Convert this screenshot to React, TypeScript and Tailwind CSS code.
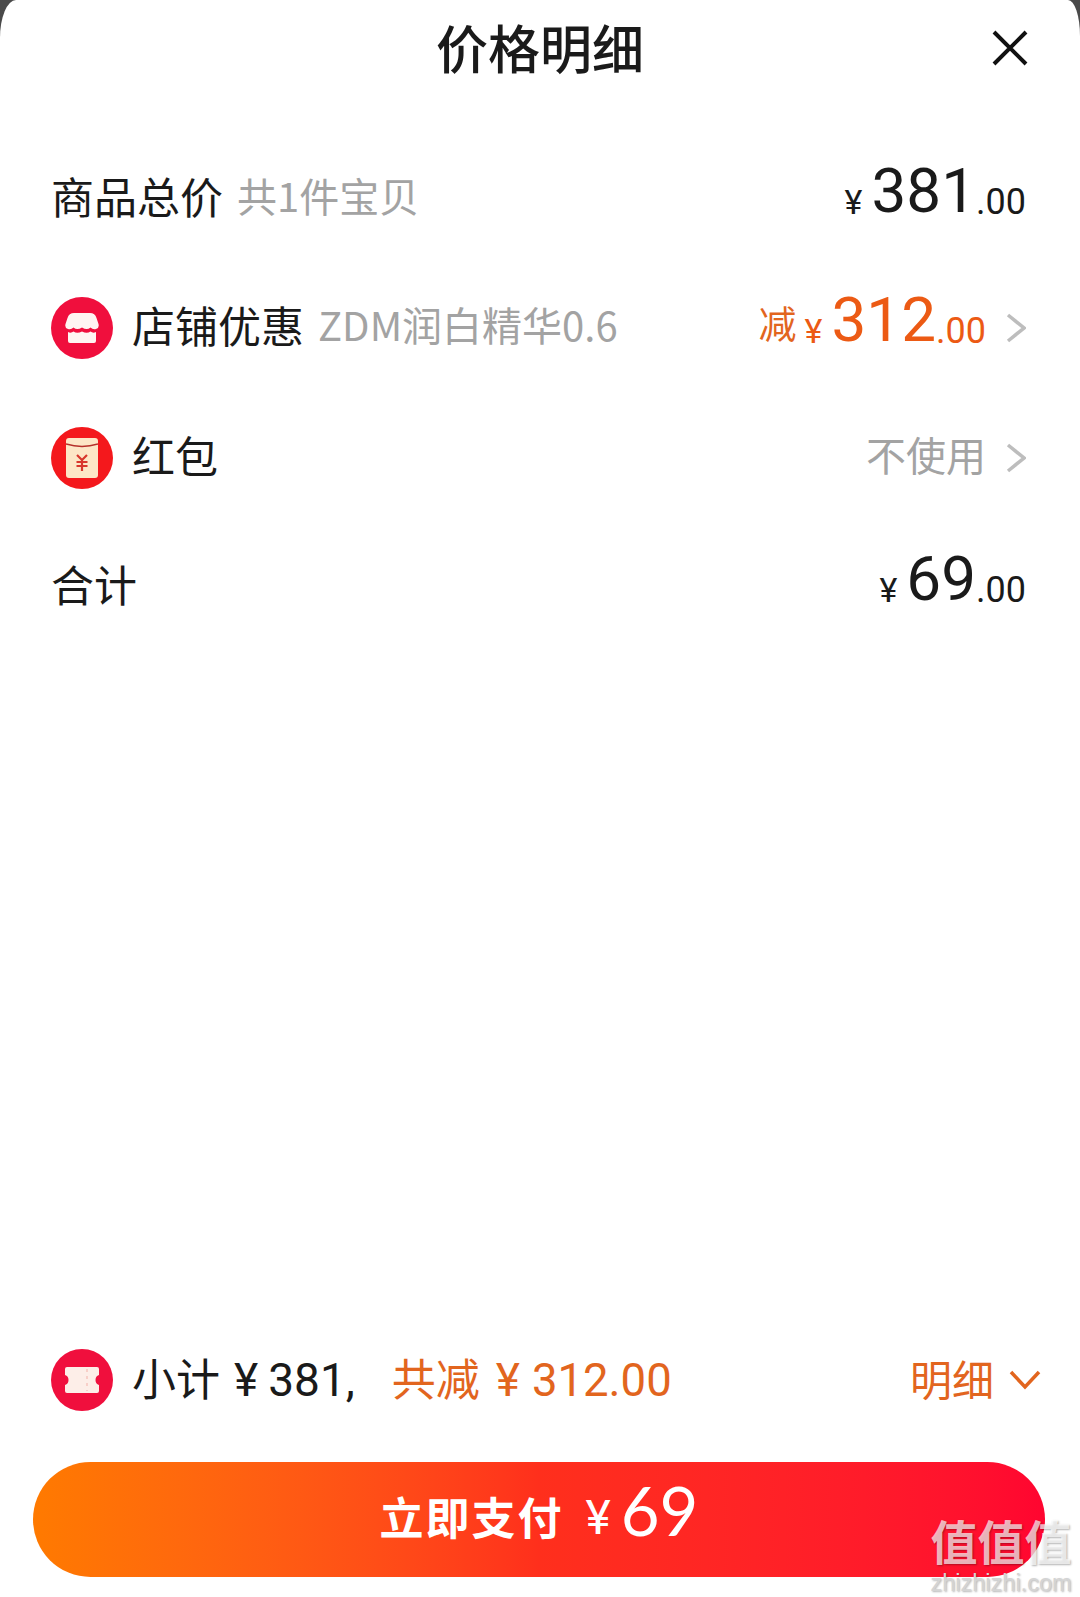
const CJK = "font-['Noto_Sans_CJK_SC','Noto_Sans',sans-serif]";

function Chevron() {
  return (
    <svg width="20" height="32" viewBox="0 0 20 32" fill="none" stroke="#bdbdbd" strokeWidth="3.500" className="shrink-0">
      <path d="M2 3 L18 16 L2 29" />
    </svg>
  );
}

function ShopIcon() {
  return (
    <div className="w-[62px] h-[62px] rounded-full bg-[#f00f3d] flex items-center justify-center shrink-0">
      <svg width="34" height="30" viewBox="0 0 34 30">
        <path d="M9 0 H25 Q30 0 31.500 5 L33.500 11 Q34.500 15 31 16 Q28 17 25.500 14.500 Q22 17.500 17 14.500 Q12 17.500 8.500 14.500 Q6 17 3 16 Q-.5 15 .5 11 L2.500 5 Q4 0 9 0 Z" fill="#fff5f2" />
        <path d="M3 19 Q6 20.500 8.500 18.500 Q12 21 17 18.500 Q22 21 25.500 18.500 Q28 20.500 31 19 V28 Q31 30 29 30 H5 Q3 30 3 28 Z" fill="#fff5f2" />
      </svg>
    </div>
  );
}

function EnvelopeIcon() {
  return (
    <div className="w-[62px] h-[62px] rounded-full bg-[#f4181c] flex items-center justify-center shrink-0">
      <svg width="32" height="40" viewBox="0 0 32 40">
        <rect x="0" y="0" width="32" height="40" rx="3" fill="#fde6c6" />
        <path d="M0 6 Q16 11 32 6" fill="none" stroke="#b5302a" strokeWidth="1.500" />
        <path d="M11 17 L16 22 L21 17 M10.500 24 H21.500 M10.500 28 H21.500 M16 22 V33" fill="none" stroke="#d8362c" strokeWidth="2.200" />
      </svg>
    </div>
  );
}

function TicketIcon() {
  return (
    <div className="w-[62px] h-[62px] rounded-full bg-[#f00f3d] flex items-center justify-center shrink-0">
      <svg width="34" height="26" viewBox="0 0 34 26">
        <path d="M2 0 H32 Q34 0 34 2 V8 Q30.500 9 30.500 13 Q30.500 17 34 18 V24 Q34 26 32 26 H2 Q0 26 0 24 V18 Q3.500 17 3.500 13 Q3.500 9 0 8 V2 Q0 0 2 0 Z" fill="#fdeee8" />
        <path d="M22 2 V24" stroke="#f8cfc8" strokeWidth="2" strokeDasharray="3 4" />
      </svg>
    </div>
  );
}

function Price({ whole, color }: { whole: string; color: string }) {
  return (
    <span className={`flex items-baseline pb-[12px] font-['Roboto',sans-serif] ${color}`}>
      <span className="text-[34px] mr-[9px] translate-y-[2px]">¥</span>
      <span className="text-[62px] leading-none">{whole}</span>
      <span className="text-[36px] leading-none translate-y-[2px]">.00</span>
    </span>
  );
}

export default function App() {
  return (
    <div className={`bg-[#4a4a4a] h-[1597px] w-[1080px] overflow-hidden ${CJK}`}>
      <div className="relative bg-white h-full rounded-tl-[16px_38px] rounded-tr-[12px_36px] flex flex-col">
        {/* Header */}
        <div className="relative flex items-center justify-center h-[98px] shrink-0">
          <span className="text-[52px] leading-none font-medium text-[#1a1a1a] pb-[5px]">价格明细</span>
          <svg width="36" height="36" viewBox="0 0 36 36" className="absolute right-[52px] top-[30px]" stroke="#111" strokeWidth="4" fill="none">
            <path d="M2 2 L34 34 M34 2 L2 34" />
          </svg>
        </div>

        {/* Rows */}
        <div className="flex flex-col pl-[51px] pr-[54px] pt-[36px]">
          <div className="h-[129.500px] flex items-center justify-between">
            <div className="flex items-center pb-[8px]">
              <span className="text-[43px] text-[#1a1a1a]">商品总价</span>
              <span className="text-[40px] text-[#a3a3a3] ml-[14px]">共1件宝贝</span>
            </div>
            <Price whole="381" color="text-[#1a1a1a]" />
          </div>

          <div className="h-[129.500px] flex items-center justify-between">
            <div className="flex items-center">
              <ShopIcon />
              <div className="flex items-center pb-[8px]">
                <span className="text-[43px] text-[#1a1a1a] ml-[19px]">店铺优惠</span>
                <span className="text-[40px] text-[#a3a3a3] ml-[14px]">ZDM润白精华0.6</span>
              </div>
            </div>
            <div className="flex items-center gap-[20px]">
              <div className="flex items-center">
                <span className="text-[38px] text-[#e2651e] mr-[8px] pb-[14px]">减</span>
                <Price whole="312" color="text-[#ec5a14]" />
              </div>
              <Chevron />
            </div>
          </div>

          <div className="h-[129.500px] flex items-center justify-between">
            <div className="flex items-center">
              <EnvelopeIcon />
              <span className="text-[43px] text-[#1a1a1a] ml-[19px] pb-[8px]">红包</span>
            </div>
            <div className="flex items-center gap-[20px]">
              <span className="text-[40px] text-[#a3a3a3] pb-[8px]">不使用</span>
              <Chevron />
            </div>
          </div>

          <div className="h-[129.500px] flex items-center justify-between">
            <span className="text-[43px] text-[#1a1a1a] pb-[8px]">合计</span>
            <Price whole="69" color="text-[#1a1a1a]" />
          </div>
        </div>

        <div className="flex-1" />

        {/* Subtotal */}
        <div className="flex items-center justify-between pl-[51px] pr-[39px] h-[62px] mb-[51px]">
          <div className="flex items-center">
            <TicketIcon />
            <div className="flex items-baseline ml-[19px] pb-[1px] text-[44px] text-[#1a1a1a]">
              <span>小计</span>
              <span className="font-['Roboto',sans-serif] text-[46px] ml-[14px]">¥</span>
              <span className="font-['Roboto',sans-serif] text-[46px] ml-[10px]">381</span>
              <span className="font-['Roboto',sans-serif] text-[46px] w-[46px]">,</span>
              <span className="text-[#e2651e]">共减</span>
              <span className="font-['Roboto',sans-serif] text-[46px] text-[#e2651e] ml-[16px]">¥</span>
              <span className="font-['Roboto',sans-serif] text-[45.500px] text-[#e2651e] ml-[12px]">312.00</span>
            </div>
          </div>
          <div className="flex items-center gap-[15px]">
            <span className="text-[42px] text-[#e2651e] pb-[6px]">明细</span>
            <svg width="32" height="20" viewBox="0 0 32 20" fill="none" stroke="#e2651e" strokeWidth="3.500">
              <path d="M2 2 L16 17 L30 2" />
            </svg>
          </div>
        </div>

        {/* Pay button */}
        <div className="px-[33px] mb-[20px]">
          <button className="w-[1012px] h-[115px] rounded-full bg-gradient-to-r from-[#ff7a00] via-[#ff2f1c] to-[#ff0530] flex items-center justify-center text-white">
            <span className="text-[44px] font-bold tracking-[2px] pb-[8px]">立即支付</span>
            <span className="text-[48px] ml-[22px] mr-[10px] font-['Roboto',sans-serif] pb-[4px]">¥</span>
            <span className="text-[67px] leading-none font-['Lato',sans-serif] pb-[18px]">69</span>
          </button>
        </div>

        {/* Watermark */}
        <div className="absolute left-[931px] top-[1516px] w-[140px] flex flex-col items-center text-white/70 [text-shadow:1px_1px_2px_rgba(0,0,0,0.3)]">
          <span className="text-[47px] leading-none font-bold whitespace-nowrap">值值值</span>
          <span className="text-[23.500px] leading-none font-['Liberation_Sans',sans-serif] text-[#d4d4d4] mt-[9px] whitespace-nowrap">zhizhizhi.com</span>
        </div>
      </div>
    </div>
  );
}
